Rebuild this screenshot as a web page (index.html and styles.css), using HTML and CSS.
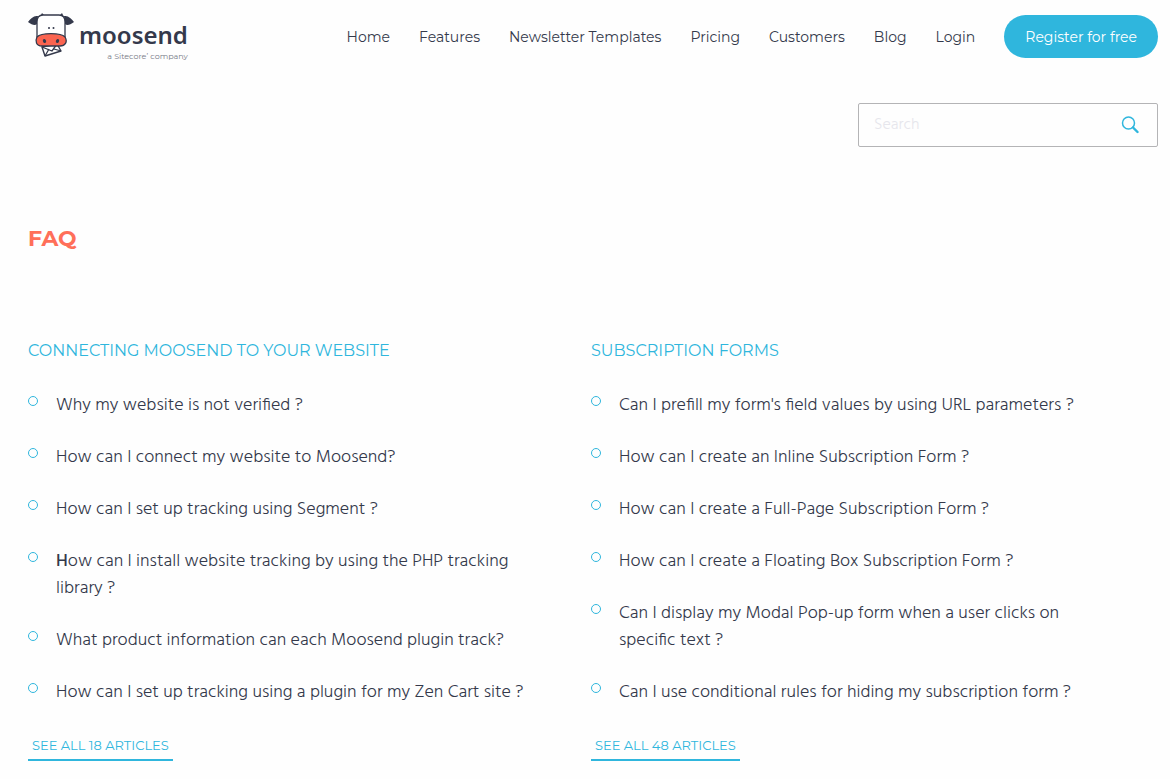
FILE: index.html
```html
<!DOCTYPE html>
<html lang="en">
<head>
  <meta charset="utf-8">
  <meta name="viewport" content="width=device-width, initial-scale=1">
  <title>FAQ - Moosend</title>
  <link rel="stylesheet" href="styles.css">
</head>
<body>

  <header class="header">
    <a class="logo" href="#">
      <svg class="logo-cow" viewBox="0 0 48 46" width="48" height="46" aria-hidden="true">
        <path d="M12 4 L14 0 L17 3 Z M31 3 L34 0 L36 4 Z" fill="#34394b"/>
        <path d="M10 3 C6 3 4 4 0 9 C4 12 7 13 9 11 Z M36 3 C40 3 42 4 46 9 C42 12 39 13 37 11 Z" fill="#34394b"/>
        <path d="M14 34 L17 43 L33 38 L29 31 Z" fill="#fff" stroke="#34394b" stroke-width="1.400" stroke-linejoin="round"/>
        <path d="M14 34 L24 38 L29 31 M17 43 L21 36 M33 38 L26 36" fill="none" stroke="#34394b" stroke-width="1.300"/>
        <path d="M9 24 L9 9 Q9 2 15 2 L31 2 Q37 2 37 9 L37 25 Z" fill="#fff" stroke="#34394b" stroke-width="1.300"/>
        <path d="M9 24 C13 19.500 33 19.500 37 24 C40 29 37 33 32 33 L14 33 C8 33 7 28 9 24 Z" fill="#fa6450" stroke="#34394b" stroke-width="1.300"/>
        <ellipse cx="16.500" cy="28" rx="1.600" ry="2.100" fill="#34394b" transform="rotate(-20 16.500 28)"/>
        <ellipse cx="29.500" cy="28" rx="1.600" ry="2.100" fill="#34394b" transform="rotate(20 29.500 28)"/>
        <circle cx="21" cy="15" r="1" fill="#34394b"/>
        <circle cx="25.500" cy="15" r="1" fill="#34394b"/>
      </svg>
      <span class="logo-text">
        <span class="logo-name">moosend</span>
        <span class="logo-tag">a Sitecore’ company</span>
      </span>
    </a>

    <nav class="nav">
      <a href="#">Home</a>
      <a href="#">Features</a>
      <a href="#">Newsletter Templates</a>
      <a href="#">Pricing</a>
      <a href="#">Customers</a>
      <a href="#">Blog</a>
      <a href="#">Login</a>
      <a class="register" href="#">Register for free</a>
    </nav>
  </header>

  <form class="search">
    <input type="search" name="s" placeholder="Search" aria-label="Search">
    <button type="submit" aria-label="Search">
      <svg viewBox="0 0 18 18" width="18" height="18" fill="none" stroke="#2fb6dd">
        <circle cx="7.500" cy="7" r="6" stroke-width="1.500"/>
        <path d="M12 11.500 L16.500 16" stroke-width="2.400" stroke-linecap="round"/>
      </svg>
    </button>
  </form>

  <main>
    <h1>FAQ</h1>

    <div class="topics">
      <section class="topic">
        <h2>CONNECTING MOOSEND TO YOUR WEBSITE</h2>
        <ul>
          <li><a href="#">Why my website is not verified ?</a></li>
          <li><a href="#">How can I connect my website to Moosend?</a></li>
          <li><a href="#">How can I set up tracking using Segment ?</a></li>
          <li><a href="#"><b>H</b>ow can I install website tracking by using the PHP tracking library ?</a></li>
          <li><a href="#">What product information can each Moosend plugin track?</a></li>
          <li><a href="#">How can I set up tracking using a plugin for my Zen Cart site ?</a></li>
        </ul>
        <a class="see-all" href="#">SEE ALL 18 ARTICLES</a>
      </section>

      <section class="topic">
        <h2>SUBSCRIPTION FORMS</h2>
        <ul>
          <li><a href="#">Can I prefill my form's field values by using URL parameters ?</a></li>
          <li><a href="#">How can I create an Inline Subscription Form ?</a></li>
          <li><a href="#">How can I create a Full-Page Subscription Form ?</a></li>
          <li><a href="#">How can I create a Floating Box Subscription Form ?</a></li>
          <li><a href="#">Can I display my Modal Pop-up form when a user clicks on specific text ?</a></li>
          <li><a href="#">Can I use conditional rules for hiding my subscription form ?</a></li>
        </ul>
        <a class="see-all" href="#">SEE ALL 48 ARTICLES</a>
      </section>
    </div>
  </main>

</body>
</html>
```
FILE: styles.css
```css
*,
*::before {
  box-sizing: border-box;
}

body {
  margin: 0;
  background: #fefefe;
  color: #34394b;
  font-family: Montserrat, Inter, sans-serif;
}

a {
  color: inherit;
  text-decoration: none;
}

.header {
  display: flex;
  justify-content: space-between;
  align-items: center;
  height: 73px;
  padding: 0 12px 0 28px;
}

.logo {
  display: flex;
  align-items: flex-start;
  gap: 3px;
}

.logo-text {
  display: flex;
  flex-direction: column;
  align-items: flex-end;
  padding-top: 5px;
}

.logo-name {
  font-family: "Noto Sans", sans-serif;
  font-size: 24px;
  font-weight: 600;
  line-height: 33px;
}

.logo-tag {
  color: #777a86;
  font-size: 8px;
  line-height: 10px;
}

.nav {
  display: flex;
  align-items: center;
  gap: 29px;
  font-size: 14px;
  white-space: nowrap;
}

.register {
  padding: 13px 21px 12px;
  border-radius: 22px;
  background: #2fb6dd;
  color: #fff;
  line-height: 18px;
}

.search {
  display: flex;
  align-items: center;
  width: 300px;
  height: 44px;
  margin: 30px 12px 0 auto;
  border: 1px solid #b4b4b6;
  border-radius: 2px;
}

.search input {
  flex: 1;
  min-width: 0;
  padding: 0 15px;
  border: 0;
  outline: 0;
  background: none;
  font-family: Hind, "Open Sans", sans-serif;
  font-size: 16px;
  font-weight: 300;
}

.search input::placeholder {
  color: #e6e6ec;
}

.search button {
  display: flex;
  padding: 0 18px;
  border: 0;
  background: none;
  cursor: pointer;
}

main {
  padding: 77px 16px 17px 28px;
}

h1 {
  margin: 0;
  color: #ff6f59;
  font-size: 22px;
  font-weight: 700;
  line-height: 30px;
}

.topics {
  display: grid;
  grid-template-columns: 1fr 1fr;
  margin-top: 85px;
}

.topic {
  padding-right: 60px;
}

h2 {
  margin: 0;
  color: #2fb6dd;
  font-size: 16px;
  font-weight: 400;
  line-height: 24px;
}

.topic ul {
  display: flex;
  flex-direction: column;
  gap: 25px;
  margin: 29px 0 27px;
  padding: 0;
  list-style: none;
}

.topic li {
  display: flex;
  gap: 18px;
  font-family: Hind, "Open Sans", sans-serif;
  font-size: 18px;
  font-weight: 300;
  line-height: 27px;
}

.topic li::before {
  content: "";
  flex: none;
  width: 10px;
  height: 10px;
  margin-top: 4px;
  border: 1px solid #2fb6dd;
  border-radius: 50%;
}

.topic li b {
  font-weight: 500;
}

.see-all {
  display: inline-block;
  padding: 0 4px 2px;
  border-bottom: 2px solid #2fb6dd;
  color: #2fb6dd;
  font-size: 13px;
  line-height: 24px;
}
```
